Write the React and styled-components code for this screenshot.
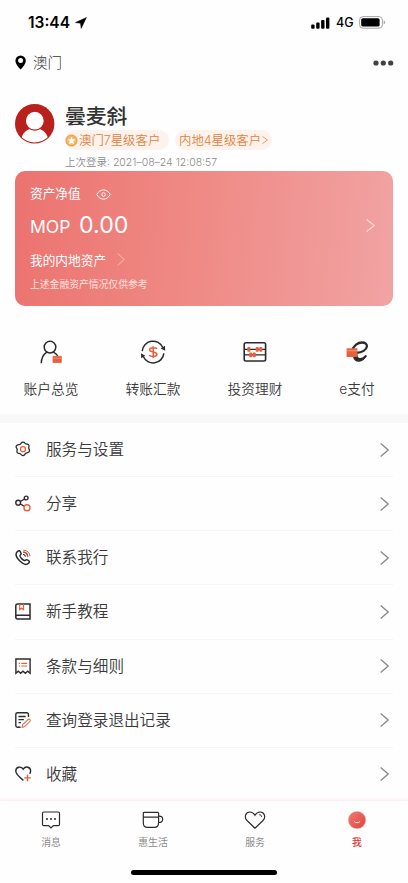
import React from 'react'
import styled, { createGlobalStyle } from 'styled-components'

const dark = '#2b2b2d'
const accent = '#e5603c'

function Chevron ({ width = 8, height = 13, color = '#8b8b8b', stroke = 1.2 }) {
  return (
    <svg width={width} height={height} viewBox='0 0 8 13' preserveAspectRatio='none' fill='none' stroke={color} strokeWidth={stroke}>
      <path d='M.6.5 7.3 6.5.6 12.5' />
    </svg>
  )
}

const AccountIcon = () => (
  <svg width='24' height='26' viewBox='0 0 24 26' fill='none' stroke={dark} strokeWidth='1.5'>
    <circle cx='11' cy='8.1' r='5.8' />
    <path d='M2.3 24.3c0-5.3 2.1-8.9 5.5-11.2M14.3 13.1c2 1 3.3 2.1 4.4 3.8' />
    <path d='M14 17.3h8.3v6.2H14z' fill={accent} stroke={accent} strokeWidth='.8' />
    <path d='M14 19.3h8.3' stroke='#f5a48d' strokeWidth='.6' />
  </svg>
)

const TransferIcon = () => (
  <svg width='26' height='26' viewBox='0 0 26 26' fill='none' stroke={dark} strokeWidth='1.5'>
    <path d='M2.2 12.1A10.8 10.8 0 0 1 22.8 8.5M23.9 14.4A10.8 10.8 0 0 1 3.3 17.5' />
    <path d='m20.6 9.6 4.4-2.8.2 5zM1 14.3l.2 5 4-2.6z' fill={dark} stroke='none' />
    <path d='M17 9.7c-.9-1.3-7.4-1.6-7.4 1 0 3.3 7.4 1.3 7.4 4.6 0 2.9-6.5 2.6-7.9.8M13.2 7.2v11.8' stroke={accent} />
  </svg>
)

const AbacusIcon = () => (
  <svg width='24' height='22' viewBox='0 0 24 22' fill='none' stroke={dark} strokeWidth='1.6'>
    <rect x='1.2' y='1.8' width='21.4' height='18.2' rx='1.7' />
    <path d='M1.2 8.3h21.4M1.2 13.8h21.4' strokeWidth='1.2' />
    <g fill={accent} stroke='none'>
      <rect x='4.3' y='5.9' width='3.1' height='4.8' rx='1' />
      <rect x='12.7' y='5.9' width='3.1' height='4.8' rx='1' />
      <rect x='16.2' y='5.9' width='3.1' height='4.8' rx='1' />
      <rect x='6.2' y='11.4' width='3.1' height='4.8' rx='1' />
      <rect x='9.7' y='11.4' width='3.1' height='4.8' rx='1' />
    </g>
  </svg>
)

// calligraphic "e" with a bank card laid over its left side
const PayIcon = () => (
  <svg width='24' height='24' viewBox='0 0 24 24'>
    <path
      d='M7.4 10.5C8.6 5.5 12.800 2.500 17 2.500c3.300 0 5.100 1.600 4.900 4-.3 3.300-4.800 6.200-10.600 6.400-.4 4.200 1 6.300 3.700 6.300 2.300 0 4.200-1.200 5.700-3.100'
      fill='none' stroke={dark} strokeWidth='2.3' strokeLinecap='round' strokeLinejoin='round'
    />
    <path d='M8 16.500c.6 3.900 3 5.500 6.300 5.300 2.800-.2 5.300-2 6.900-5.500-2.200 2.300-4.300 3.300-6.500 2.900-2-.3-2.900-1.800-3-4z' fill={dark} />
    <path d='M1.600 8.300h10.800v8.700H1.600z' fill={accent} />
    <path d='M1.600 10.700h10.800' stroke='#f6a58f' strokeWidth='.8' />
  </svg>
)

const GearIcon = () => (
  <svg width='16' height='17' viewBox='0 0 16 17' fill='none' stroke={dark} strokeWidth='1.3'>
    <path d='M6.300 2C7.100.9 8.900.9 9.700 2c.6.900 1.100 1.200 2.200 1.100 1.500-.1 2.500 1.400 2 2.700-.5 1.100-.4 1.600.3 2.500.6.9.3 2.300-.6 2.900-.7.4-1 .6-1.700.6-1.100.1-1.600.5-2 1.500-.6 1.500-2.800 1.700-3.700.4-.6-1-1.100-1.300-2.200-1.300-1.400 0-2.500-1.300-2-2.600.4-1.100.4-1.700-.3-2.500C.7 6.200 1 5 2 4.300c.7-.4 1.200-.5 1.900-.6 1.100-.1 1.800-.6 2.400-1.700z' strokeLinejoin='round' />
    <circle cx='8' cy='8.200' r='2.500' stroke={accent} />
  </svg>
)

const ShareIcon = () => (
  <svg width='16' height='17' viewBox='0 0 16 17' fill='none' stroke={dark} strokeWidth='1.4'>
    <circle cx='3.2' cy='7.700' r='2.400' />
    <circle cx='11.2' cy='3' r='1.900' />
    <path d='m5.300 6.500 4.200-2.500M5.200 9l3.900 2.200' />
    <circle cx='12' cy='12.800' r='3' stroke={accent} />
  </svg>
)

const PhoneIcon = () => (
  <svg width='16' height='17' viewBox='0 0 16 17' fill='none' stroke={dark} strokeWidth='1.5'>
    <path d='M2.200 2.800C4.300.9 5 1.500 6 4.200c.3.9-.1 1.400-.8 2-.6.6.2 2.200 1.700 3.700s2.800 2 3.500 1.300c.8-.9 1.300-.8 2.500-.1 1.800 1 1.900 1.800.6 3.100-2 2-5.200 1.200-8.400-1.900C1.700 9 .1 5.100 2.200 2.800z' strokeLinejoin='round' />
    <path d='M8 5.200c1.400.2 2.300 1.100 2.500 2.500' strokeWidth='1.100' />
    <path d='M8 3.100c2.700.2 4.500 2 4.700 4.600' stroke='#9c5546' />
    <path d='M8.400 1.100c3.700.2 6.300 2.700 6.600 6.200' stroke={accent} strokeWidth='1' />
  </svg>
)

const BookIcon = () => (
  <svg width='16' height='17' viewBox='0 0 16 17' fill='none' stroke={dark} strokeWidth='1.5'>
    <path d='M15 12.300V.9H2.600C1.500.9.8 1.600.8 2.700v11.200c0 1.200.8 2 1.900 2H15v-3.600H2.500c-.9 0-1.700.6-1.700 1.500' />
    <path d='M4.700 1v5.600l1.900-1.400 1.900 1.400V1' stroke={accent} strokeWidth='1.200' />
  </svg>
)

const TermsIcon = () => (
  <svg width='16' height='17' viewBox='0 0 16 17' fill='none' stroke={dark} strokeWidth='1.400'>
    <path d='M.9 15.200V1h14.200v14.200l-2.400-2.100-2.300 2.100L8 13.100l-2.400 2.100-2.300-2.100z' />
    <path d='M3.800 5.300h1.300M6.300 5.300h5.900M3.800 8h1.300M6.300 8h5.900' stroke={accent} strokeWidth='1.200' />
  </svg>
)

const RecordIcon = () => (
  <svg width='16' height='17' viewBox='0 0 16 17' fill='none' stroke={dark} strokeWidth='1.400'>
    <path d='M13.500 5V2.500c0-1-.7-1.700-1.700-1.700H2.500C1.500.8.8 1.500.8 2.500v11c0 1 .7 1.700 1.700 1.700h3.100M3.500 4.500h7.200M3.500 7.600h5.400M3.500 10.600h2.400' />
    <path d='m7.100 15.400.5-2.800 5.500-5.100c1.200-1 2.900.8 1.800 1.900l-5.200 5.200z' stroke='#df7658' strokeWidth='1.100' />
  </svg>
)

const FavouriteIcon = () => (
  <svg width='17' height='17' viewBox='0 0 17 17' fill='none' stroke={dark} strokeWidth='1.400'>
    <path d='M8.400 14.400C3.400 10.500.8 8.100.8 5.100.8 1 5.800-.4 8.200 3.200 10.700-.5 15.600 1 15.600 5c0 1.300-.4 2.200-.9 2.900' />
    <path d='M12.500 8.600v6.600M9.200 11.900h6.600' stroke={accent} />
  </svg>
)

const MessageIcon = () => (
  <svg width='20' height='18' viewBox='0 0 20 18' fill='none' stroke={dark} strokeWidth='1.200'>
    <path d='M2.700 1h14.600c.8 0 1.200.4 1.200 1.200v11.200c0 .8-.4 1.200-1.200 1.200h-4.900L10 16.900l-2.400-2.300H2.700c-.8 0-1.200-.4-1.200-1.200V2.200C1.500 1.400 1.900 1 2.700 1z' />
    <g fill={dark} stroke='none'>
      <circle cx='6' cy='8' r='1' />
      <circle cx='10' cy='8' r='1' />
      <circle cx='14' cy='8' r='1' />
    </g>
  </svg>
)

const CupIcon = () => (
  <svg width='22' height='18' viewBox='0 0 22 18' fill='none' stroke={dark} strokeWidth='1.200'>
    <path d='M2.300 1.300h13.400c.6 0 .9.3.9.9v9.200c0 3.500-1.300 5-4.200 5H5.500c-2.900 0-4.200-1.500-4.200-5V2.200c0-.6.4-.9 1-.9zM1.300 6.100h15.300' />
    <path d='M16.700 5.100c2.500-.2 4 1 4 3.200 0 2.100-1.600 3.400-4 3.200' />
  </svg>
)

const HeartIcon = () => (
  <svg width='22' height='18' viewBox='0 0 22 18' fill='none' stroke={dark} strokeWidth='1.200'>
    <path d='M11 17.200 3 9.500C-.1 6.300 1.400 1 5.900 1 8.400 1 10 2.600 11 4.300 12 2.600 13.600 1 16.100 1c4.500 0 6 5.300 2.900 8.500z' />
    <path d='M15.200 3.700c1.500 0 2.400.8 2.500 2.200' strokeWidth='1' />
  </svg>
)

const FaceIcon = () => (
  <svg width='20' height='20' viewBox='0 0 20 20' fill='none'>
    <defs>
      <linearGradient id='face' x1='0' y1='0' x2='1' y2='1'>
        <stop stopColor='#f17b70' />
        <stop offset='1' stopColor='#dc4440' />
      </linearGradient>
    </defs>
    <circle cx='10' cy='10' r='8.800' fill='url(#face)' stroke='#fbd0cc' strokeWidth='.5' />
    <path d='M7 11.400c1.400 1.800 4.700 1.800 6.100 0' stroke='#ffdcd8' strokeWidth='1' />
  </svg>
)

const shortcuts = [
  { label: '账户总览', icon: <AccountIcon /> },
  { label: '转账汇款', icon: <TransferIcon /> },
  { label: '投资理财', icon: <AbacusIcon /> },
  { label: 'e支付', icon: <PayIcon /> }
]

const menu = [
  { label: '服务与设置', icon: <GearIcon /> },
  { label: '分享', icon: <ShareIcon /> },
  { label: '联系我行', icon: <PhoneIcon /> },
  { label: '新手教程', icon: <BookIcon /> },
  { label: '条款与细则', icon: <TermsIcon /> },
  { label: '查询登录退出记录', icon: <RecordIcon /> },
  { label: '收藏', icon: <FavouriteIcon /> }
]

const tabs = [
  { label: '消息', icon: <MessageIcon /> },
  { label: '惠生活', icon: <CupIcon /> },
  { label: '服务', icon: <HeartIcon /> },
  { label: '我', icon: <FaceIcon />, active: true }
]

function App () {
  return (
    <Screen>
      <GlobalStyle />
      <StatusBar>
        <Clock>13:44</Clock>
        <svg width='12' height='12' viewBox='0 0 12 12'>
          <path d='M11.400.5.4 5.600l5.100.6.7 5.200z' stroke='#000' strokeWidth='.5' strokeLinejoin='round' />
        </svg>
        <StatusRight>
          <svg width='19' height='12' viewBox='0 0 19 12'>
            <rect x='.2' y='7.500' width='3.400' height='4.200' rx='1' />
            <rect x='5.200' y='5.600' width='3.400' height='6.100' rx='1' />
            <rect x='10.100' y='3.100' width='3.400' height='8.600' rx='1' />
            <rect x='15' y='.4' width='3.400' height='11.300' rx='1' />
          </svg>
          <Network>4G</Network>
          <svg width='27' height='13' viewBox='0 0 27 13'>
            <rect x='.6' y='.6' width='22.800' height='11.600' rx='3.300' fill='none' stroke='#a5a5a5' />
            <rect x='2.200' y='2.200' width='18.400' height='8.400' rx='1.600' />
            <path d='M24.700 4.300c2 .8 2 3.400 0 4.200z' fill='#a5a5a5' />
          </svg>
        </StatusRight>
      </StatusBar>

      <LocationBar>
        <svg width='12' height='15' viewBox='0 0 12 15'>
          <path fillRule='evenodd' d='M5.600.4a5.200 5.200 0 0 1 5.200 5.300c0 3-2.600 6.400-5.200 8.800C3 12.100.4 8.700.4 5.700A5.200 5.200 0 0 1 5.600.4zm0 2.700a2.500 2.500 0 1 0 0 5 2.500 2.500 0 0 0 0-5z' />
        </svg>
        <Place>澳门</Place>
        <svg width='21' height='6' viewBox='0 0 21 6' fill='#414141'>
          <circle cx='3' cy='3' r='2.600' />
          <circle cx='10.300' cy='3' r='2.600' />
          <circle cx='17.700' cy='3' r='2.600' />
        </svg>
      </LocationBar>

      <Profile>
        <svg width='40' height='40' viewBox='0 0 40 40'>
          <defs>
            <clipPath id='avatar'><circle cx='19.700' cy='19.700' r='18.800' /></clipPath>
          </defs>
          <circle cx='19.700' cy='19.700' r='19.700' fill='#b8211c' />
          <g clipPath='url(#avatar)' fill='#fff'>
            <ellipse cx='19.700' cy='37' rx='13.500' ry='13' />
            <circle cx='19.800' cy='16.700' r='9.500' stroke='#b8211c' strokeWidth='1.200' />
          </g>
        </svg>
        <ProfileText>
          <UserName>曇麦斜</UserName>
          <Chips>
            <Chip $width='104px'>
              <svg width='13' height='13' viewBox='0 0 13 13'>
                <circle cx='6.500' cy='6.500' r='5.500' fill='#f7b663' stroke='#e99535' />
                <path d='m6.500 2.700 1.200 2.500 2.700.4-2 1.900.5 2.700-2.400-1.300-2.400 1.300.5-2.700-2-1.900 2.700-.4z' fill='#fff' />
              </svg>
              澳门7星级客户
            </Chip>
            <Chip $width='97px' $padded>
              内地4星级客户
              <Chevron width={6} height={8} color='#d98b53' />
            </Chip>
          </Chips>
          <LastLogin>上次登录: <span>2021–08–24 12:08:57</span></LastLogin>
        </ProfileText>
      </Profile>

      <AssetCard>
        <AssetInfo>
          <AssetTitle>
            资产净值
            <svg width='15' height='11' viewBox='0 0 16 11' preserveAspectRatio='none' fill='none' stroke='#fff' strokeWidth='1'>
              <path d='M.8 5.500C4.600-.7 11.400-.7 15.200 5.500 11.400 11.700 4.600 11.700.8 5.500z' />
              <circle cx='8' cy='5.500' r='1.800' />
            </svg>
          </AssetTitle>
          <Balance><Currency>MOP</Currency>0.00</Balance>
          <Mainland>我的内地资产<Chevron height={13} color='#f7bcb8' stroke={1} /></Mainland>
          <Notice>上述金融资产情况仅供参考</Notice>
        </AssetInfo>
        <CardArrow><Chevron width={9} height={13} color='#fbd5d2' /></CardArrow>
      </AssetCard>

      <Shortcuts>
        {shortcuts.map(item => (
          <Shortcut key={item.label}>
            <ShortcutIcon>{item.icon}</ShortcutIcon>
            {item.label}
          </Shortcut>
        ))}
      </Shortcuts>

      <Menu>
        {menu.map(item => (
          <MenuRow key={item.label}>
            <MenuIcon>{item.icon}</MenuIcon>
            <MenuLabel>{item.label}</MenuLabel>
            <Chevron width={9} height={14} />
          </MenuRow>
        ))}
      </Menu>

      <TabBar>
        <Tabs>
          {tabs.map(tab => (
            <Tab key={tab.label} $active={tab.active}>
              <TabIcon>{tab.icon}</TabIcon>
              {tab.label}
            </Tab>
          ))}
        </Tabs>
        <HomeIndicator />
      </TabBar>
    </Screen>
  )
}

const GlobalStyle = createGlobalStyle`
  * {
    box-sizing: border-box;
  }

  body {
    margin: 0;
    background: #fff;
  }

  svg {
    display: block;
    flex-shrink: 0;
  }
`

const Screen = styled.div`
  display: flex;
  flex-direction: column;
  width: 408px;
  height: 883px;
  overflow: hidden;
  background: #fefefe;
  color: #3a3a3a;
  font-family: Inter, 'Noto Sans CJK SC', sans-serif;
  font-weight: 400;
  white-space: nowrap;
`

const StatusBar = styled.header`
  display: flex;
  align-items: center;
  height: 45px;
  padding: 0 22px 0 28px;
  color: #000;
`

const Clock = styled.span`
  width: 47px;
  font-size: 15.5px;
  font-weight: 600;
`

const StatusRight = styled.div`
  display: flex;
  align-items: center;
  margin-left: auto;
`

const Network = styled.span`
  width: 23px;
  margin-left: 6px;
  font-size: 12.5px;
  font-weight: 500;
`

const LocationBar = styled.div`
  display: flex;
  align-items: center;
  height: 35px;
  padding: 0 14px 0 15px;
`

const Place = styled.span`
  flex: 1;
  margin-left: 6px;
  padding-bottom: 2px;
  font-size: 14.6px;
  font-weight: 300;
`

const Profile = styled.section`
  display: flex;
  gap: 10px;
  height: 91px;
  padding: 24px 15px 0;
`

const ProfileText = styled.div`
  display: flex;
  flex-direction: column;
`

const UserName = styled.h1`
  height: 26px;
  margin: 0;
  line-height: 25px;
  font-size: 20.8px;
  font-weight: 500;
  color: #333;
`

const Chips = styled.div`
  display: flex;
  gap: 6px;
`

const Chip = styled.span`
  display: flex;
  align-items: center;
  gap: 1px;
  width: ${props => props.$width};
  height: 20px;
  padding-left: ${props => props.$padded ? '4px' : '0'};
  border-radius: 10px;
  background: #fdf2ec;
  color: #e0823f;
  font-size: 12.4px;
  font-weight: 350;
`

const LastLogin = styled.p`
  margin: 5px 0 0;
  line-height: 16px;
  color: #8c8c8c;
  font-size: 10.5px;
  font-weight: 350;
`

const AssetCard = styled.section`
  display: flex;
  height: 135px;
  margin: 0 15px;
  padding: 13px 18px 0 15px;
  border-radius: 10px;
  background: linear-gradient(95deg, #ec736f 0%, #ef8984 46%, #f1a3a3 100%);
  color: #fff;
`

const AssetInfo = styled.div`
  flex: 1;
`

const AssetTitle = styled.div`
  display: flex;
  align-items: center;
  gap: 15px;
  height: 20px;
  line-height: 18px;
  font-size: 12.7px;
`

const Balance = styled.div`
  display: flex;
  align-items: baseline;
  height: 43px;
  line-height: 42px;
  font-size: 23.2px;
`

const Currency = styled.span`
  width: 49px;
  font-size: 17.5px;
`

const Mainland = styled.div`
  display: flex;
  align-items: center;
  gap: 11px;
  height: 24px;
  font-size: 12.7px;
`

const Notice = styled.div`
  height: 26px;
  line-height: 28px;
  color: #ffe3df;
  font-size: 9.8px;
`

const CardArrow = styled.div`
  padding-top: 35px;
`

const Shortcuts = styled.section`
  display: grid;
  grid-template-columns: repeat(4, 1fr);
  height: 117px;
  padding-top: 33px;
  border-bottom: 9px solid #f8f8f8;
`

const Shortcut = styled.div`
  display: flex;
  flex-direction: column;
  align-items: center;
  line-height: 20px;
  font-size: 13.7px;
  font-weight: 350;
`

const ShortcutIcon = styled.span`
  display: flex;
  align-items: center;
  height: 26px;
  margin-bottom: 14px;
`

const Menu = styled.ul`
  flex: 1;
  min-height: 0;
  margin: 0;
  padding: 0 15px;
  overflow: hidden;
  list-style: none;
`

const MenuRow = styled.li`
  display: flex;
  align-items: center;
  height: 54.15px;
  padding-right: 4px;
  border-bottom: 1px solid #f5f5f5;
`

const MenuIcon = styled.span`
  width: 31px;
`

const MenuLabel = styled.span`
  flex: 1;
  padding-bottom: 3px;
  font-size: 15.6px;
  font-weight: 350;
`

const TabBar = styled.footer`
  position: relative;
  height: 82px;
  background: #fefefe;
  box-shadow: 0 -1px 4px rgba(235, 130, 120, 0.2);
`

const Tabs = styled.nav`
  display: grid;
  grid-template-columns: repeat(4, 1fr);
  height: 69px;
  padding-top: 9px;
`

const Tab = styled.div`
  display: flex;
  flex-direction: column;
  align-items: center;
  line-height: 14px;
  color: ${props => props.$active ? '#d83a35' : '#8c8c8c'};
  font-size: 9.8px;
  font-weight: ${props => props.$active ? 500 : 400};
`

const TabIcon = styled.span`
  display: flex;
  align-items: center;
  height: 20px;
  margin-bottom: 6px;
`

const HomeIndicator = styled.div`
  width: 146px;
  height: 5px;
  margin: 0 auto;
  border-radius: 3px;
  background: #000;
`

export default App
